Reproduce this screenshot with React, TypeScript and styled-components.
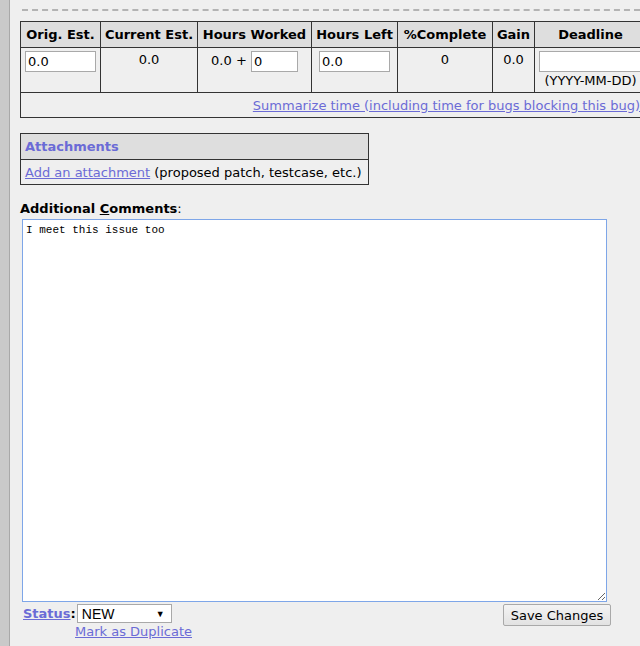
import React from "react";
import styled, { createGlobalStyle } from "styled-components";

const Global = createGlobalStyle`
  html, body { margin: 0; padding: 0; overflow: hidden; background: #efefef; }
  body { font-family: "DejaVu Sans", Verdana, sans-serif; font-size: 13px; color: #000; }
`;

const Page = styled.div`
  display: flex;
  min-height: 646px;
  width: 640px;
  overflow: hidden;
`;

const SideStrip = styled.div`
  width: 9px;
  flex: none;
  background: #c9c9c9;
  border-right: 1px solid #a8a8a8;
`;

const Content = styled.div`
  flex: 1;
  padding: 9px 0 0 10px;
  min-width: 0;
`;

const Dashed = styled.div`
  margin-left: 2px;
  height: 0;
  border-top: 2px dashed #b3b3b3;
  margin-bottom: 10px;
`;

const Link = styled.a`
  color: #6b6bd6;
  text-decoration: underline;
  cursor: pointer;
`;

const TimeTable = styled.table`
  border-collapse: collapse;
  table-layout: fixed;
  width: 627px;
  border: 1px solid #333;
`;

const HeadCell = styled.th<{ $w: number }>`
  width: ${(p) => p.$w}px;
  background: #dedede;
  border: 1px solid #333;
  height: 25px;
  padding: 0;
  font-weight: bold;
  text-align: center;
  white-space: nowrap;
`;

const DataCell = styled.td`
  border: 1px solid #333;
  vertical-align: top;
  text-align: center;
  height: 41px;
  padding: 3px 4px 0;
  white-space: nowrap;
`;

const ValueText = styled.div`
  padding-top: 1px;
`;

const TextBox = styled.input<{ $w: number }>`
  box-sizing: border-box;
  width: ${(p) => p.$w}px;
  height: 21px;
  border: 1px solid #a9a9a9;
  background: #fff;
  font-family: "DejaVu Sans", Verdana, sans-serif;
  font-size: 13px;
  padding: 1px 2px;
  margin: 0;
  vertical-align: middle;
  outline: none;
`;

const LeftField = styled.div`
  text-align: left;
`;

const DateHint = styled.div`
  margin-top: 1px;
  text-align: center;
`;

const SummaryCell = styled.td`
  border: 1px solid #333;
  text-align: right;
  height: 24px;
  padding: 0 6px 0 0;
  white-space: nowrap;
`;

const AttachTable = styled.table`
  border-collapse: collapse;
  margin-top: 15px;
  width: 349px;
  border: 1px solid #333;
`;

const AttachHead = styled.th`
  background: #dedede;
  border: 1px solid #333;
  color: #6b6bd6;
  font-weight: bold;
  text-align: left;
  height: 25px;
  padding: 0 4px;
`;

const AttachCell = styled.td`
  border: 1px solid #333;
  height: 24px;
  padding: 0 4px;
  white-space: nowrap;
`;

const CommentLabel = styled.div`
  margin-top: 16px;
  margin-bottom: 2px;
  line-height: 16px;
`;

const Strong = styled.b`
  font-weight: bold;
`;

const TextArea = styled.textarea`
  display: block;
  box-sizing: border-box;
  margin-left: 2px;
  width: 585px;
  height: 383px;
  border: 1px solid #7ea6e8;
  background: #fff;
  font-family: "Liberation Mono", "Courier New", monospace;
  font-size: 11px;
  padding: 4px 3px;
  outline: none;
  resize: both;
`;

const Footer = styled.div`
  display: flex;
  justify-content: space-between;
  align-items: flex-start;
  width: 588px;
  margin-left: 3px;
  margin-top: 2px;
`;

const StatusColumn = styled.div`
  display: flex;
  flex-direction: column;
`;

const StatusRow = styled.div`
  display: flex;
  align-items: center;
  height: 19px;
`;

const StatusLink = styled(Link)`
  font-weight: bold;
`;

const Colon = styled.span`
  font-weight: bold;
  margin-right: 1px;
`;

const SelectBox = styled.div`
  box-sizing: border-box;
  width: 95px;
  height: 19px;
  border: 1px solid #a9a9a9;
  background: #fff;
  display: flex;
  align-items: center;
  justify-content: space-between;
  padding: 0 6px 0 4px;
  font-family: "Liberation Sans", Arial, sans-serif;
  font-size: 14px;
`;

const Arrow = styled.span`
  font-size: 9px;
`;

const DupLink = styled(Link)`
  margin-left: 52px;
  margin-top: 1px;
`;

const SaveButton = styled.button`
  box-sizing: border-box;
  width: 108px;
  height: 22px;
  border: 1px solid #a9a9a9;
  border-radius: 2px;
  background: linear-gradient(#f4f4f4, #e2e2e2);
  font-family: "DejaVu Sans", Verdana, sans-serif;
  font-size: 13px;
  color: #000;
  padding: 0;
`;

const cols = [
  { label: "Orig. Est.", w: 79 },
  { label: "Current Est.", w: 96 },
  { label: "Hours Worked", w: 113 },
  { label: "Hours Left", w: 85 },
  { label: "%Complete", w: 94 },
  { label: "Gain", w: 41 },
  { label: "Deadline", w: 111 },
];

export default function App() {
  return (
    <>
      <Global />
      <Page>
        <SideStrip />
        <Content>
          <Dashed />
          <TimeTable>
            <thead>
              <tr>
                {cols.map((c) => (
                  <HeadCell key={c.label} $w={c.w}>
                    {c.label}
                  </HeadCell>
                ))}
              </tr>
            </thead>
            <tbody>
              <tr>
                <DataCell>
                  <LeftField>
                    <TextBox $w={71} defaultValue="0.0" />
                  </LeftField>
                </DataCell>
                <DataCell>
                  <ValueText>0.0</ValueText>
                </DataCell>
                <DataCell>
                  0.0 + <TextBox $w={47} defaultValue="0" />
                </DataCell>
                <DataCell>
                  <TextBox $w={71} defaultValue="0.0" />
                </DataCell>
                <DataCell>
                  <ValueText>0</ValueText>
                </DataCell>
                <DataCell>
                  <ValueText>0.0</ValueText>
                </DataCell>
                <DataCell>
                  <LeftField>
                    <TextBox $w={120} defaultValue="" />
                  </LeftField>
                  <DateHint>(YYYY-MM-DD)</DateHint>
                </DataCell>
              </tr>
              <tr>
                <SummaryCell colSpan={7}>
                  <Link>Summarize time (including time for bugs blocking this bug)</Link>
                </SummaryCell>
              </tr>
            </tbody>
          </TimeTable>

          <AttachTable>
            <thead>
              <tr>
                <AttachHead>Attachments</AttachHead>
              </tr>
            </thead>
            <tbody>
              <tr>
                <AttachCell>
                  <Link>Add an attachment</Link> (proposed patch, testcase, etc.)
                </AttachCell>
              </tr>
            </tbody>
          </AttachTable>

          <CommentLabel>
            <Strong>
              Additional <u>C</u>omments
            </Strong>
            :
          </CommentLabel>
          <TextArea defaultValue="I meet this issue too" />

          <Footer>
            <StatusColumn>
              <StatusRow>
                <StatusLink>Status</StatusLink>
                <Colon>:</Colon>
                <SelectBox>
                  NEW <Arrow>▼</Arrow>
                </SelectBox>
              </StatusRow>
              <DupLink>Mark as Duplicate</DupLink>
            </StatusColumn>
            <SaveButton>Save Changes</SaveButton>
          </Footer>
        </Content>
      </Page>
    </>
  );
}
